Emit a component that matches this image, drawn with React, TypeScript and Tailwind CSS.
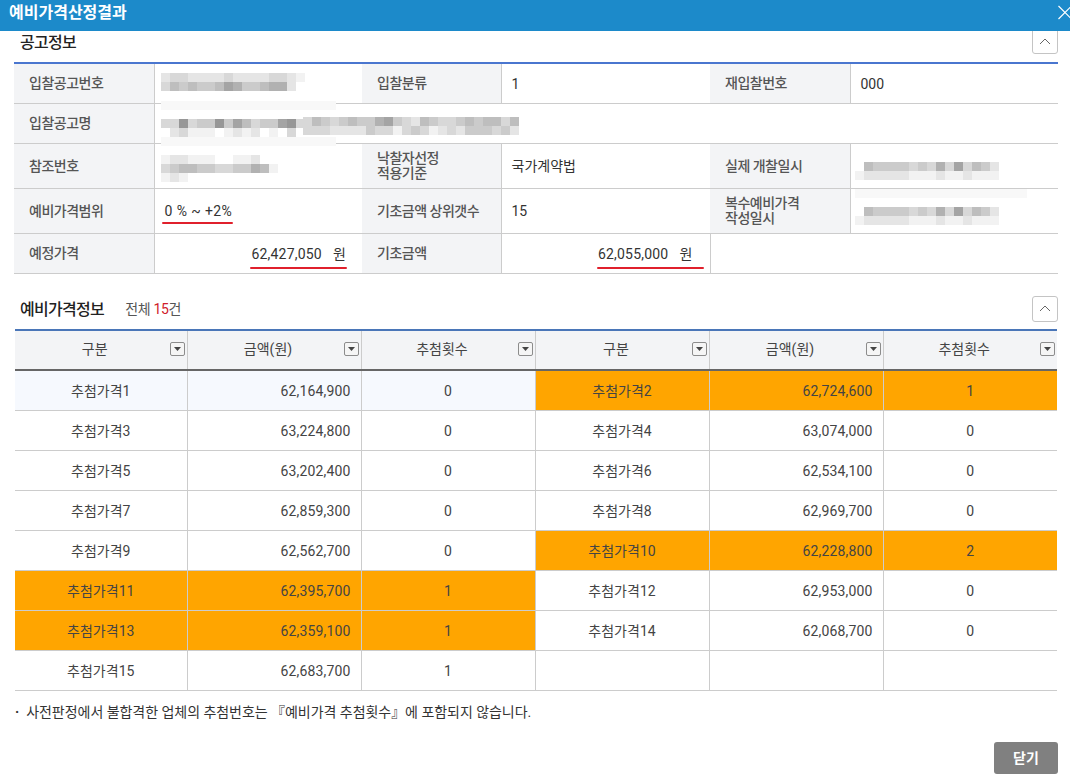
import React from 'react';

const fontStack = 'font-["Roboto","Noto_Sans_CJK_KR",sans-serif]';

// blurred-out values in the screenshot, each digit is a grey level
const shade = (d: string) => {
  const v = 255 - Number(d) * 13;
  return `rgb(${v},${v},${v})`;
};

const Mosaic: React.FC<{ rows: string[]; className: string }> = ({ rows, className }) => (
  <svg
    className={`absolute ${className}`}
    width={rows[0].length * 9}
    height={rows.length * 9}
    shapeRendering="crispEdges"
  >
    {rows.map((row, y) =>
      row.split('').map((c, x) => <rect key={`${x}-${y}`} x={x * 9} y={y * 9} width={9} height={9} fill={shade(c)} />),
    )}
  </svg>
);

const Label: React.FC<{ children: React.ReactNode }> = ({ children }) => (
  <td className="border border-[#cccccc] border-l-0 bg-[#f3f4f6] pl-[15px] pr-2 text-[14px] leading-[15px] font-medium tracking-[-0.5px] text-[#555555]">
    <div className="pt-[1px]">{children}</div>
  </td>
);

const Value: React.FC<{ children?: React.ReactNode; colSpan?: number; className?: string }> = ({
  children,
  colSpan,
  className = '',
}) => (
  <td colSpan={colSpan} className={`relative border border-[#cccccc] border-r-0 px-[10px] pt-[2px] text-[14px] text-[#333333] ${className}`}>
    {children}
  </td>
);

const CollapseButton = ({ className = '' }: { className?: string }) => (
  <button className={`flex h-[26px] w-[26px] items-center justify-center rounded-[3px] border border-[#c4c4c4] bg-white ${className}`}>
    <svg width="12" height="7" viewBox="0 0 12 7" fill="none" stroke="#666666" strokeWidth="1">
      <path d="M1 6 L6 1 L11 6" />
    </svg>
  </button>
);

const InfoTable = () => (
  <table className="ml-[14px] w-[1044px] table-fixed border-collapse border-t-2 border-b border-t-[#4a76cf] border-b-[#555555]">
    <colgroup>
      <col className="w-[140px]" />
      <col className="w-[208px]" />
      <col className="w-[139px]" />
      <col className="w-[209px]" />
      <col className="w-[140px]" />
      <col className="w-[208px]" />
    </colgroup>
    <tbody>
      <tr className="h-[40px]">
        <Label>입찰공고번호</Label>
        <Value>
          <Mosaic className="left-[6px] top-[9px]" rows={['2332222322223321', '3545445764456620']} />
        </Value>
        <Label>입찰분류</Label>
        <Value>1</Value>
        <Label>재입찰번호</Label>
        <Value>000</Value>
      </tr>
      <tr className="h-[40px]">
        <Label>입찰공고명</Label>
        <Value colSpan={5}>
          <div className="absolute left-[6px] top-[-3px] h-[9px] w-[175px] bg-[#f8f8f8]" />
          <div className="absolute left-[6px] top-[33px] h-[9px] w-[175px] bg-[#f8f8f8]" />
          <Mosaic className="left-[6px] top-[15px]" rows={['3383448475344783', '0231110121201030']} />
          <Mosaic className="left-[148px] top-[13px]" rows={['354345446743254334545535', '333222243313431232444342']} />
        </Value>
      </tr>
      <tr className="h-[45px]">
        <Label>참조번호</Label>
        <Value>
          <Mosaic className="left-[6px] top-[11px]" rows={['1221110011200', '3455443344651', '1210000000000']} />
        </Value>
        <Label>
          낙찰자선정
          <br />
          적용기준
        </Label>
        <Value>국가계약법</Value>
        <Label>실제 개찰일시</Label>
        <Value>
          <Mosaic className="left-[4px] top-[18px]" rows={['0544443436373542', '1222221112112111']} />
        </Value>
      </tr>
      <tr className="h-[45px]">
        <Label>예비가격범위</Label>
        <Value className="pl-[10px]">
          <span className="relative tracking-[0.4px]">
            0 % ~ +2%
            <span className="absolute left-[-3px] right-[-1px] top-[19px] h-[2px] rounded-full bg-[#e0202c]" />
          </span>
        </Value>
        <Label>기초금액 상위갯수</Label>
        <Value>15</Value>
        <Label>
          복수예비가격
          <br />
          작성일시
        </Label>
        <Value>
          <div className="absolute left-[4px] top-0 h-[9px] w-[172px] bg-[#f8f8f8]" />
          <Mosaic className="left-[4px] top-[18px]" rows={['0544443436373542', '1222221112112111']} />
        </Value>
      </tr>
      <tr className="h-[40px]">
        <Label>예정가격</Label>
        <Value className="text-right">
          <span className="relative mr-[5px] pr-[1px] tracking-[0.2px]">
            62,427,050 &nbsp; 원
            <span className="absolute left-[-1px] right-0 top-[21px] h-[2px] rounded-full bg-[#e0202c]" />
          </span>
        </Value>
        <Label>기초금액</Label>
        <Value className="text-right">
          <span className="relative mr-[-5px] pr-[12px] tracking-[0.2px]">
            62,055,000 &nbsp; 원
            <span className="absolute left-[-1px] right-[1px] top-[21px] h-[2px] rounded-full bg-[#e0202c]" />
          </span>
        </Value>
        <Value colSpan={2} />
      </tr>
    </tbody>
  </table>
);

type Price = { name: string; amount: string; count: string; hit?: boolean };

const rows: [Price, Price | null][] = [
  [{ name: '추첨가격1', amount: '62,164,900', count: '0' }, { name: '추첨가격2', amount: '62,724,600', count: '1', hit: true }],
  [{ name: '추첨가격3', amount: '63,224,800', count: '0' }, { name: '추첨가격4', amount: '63,074,000', count: '0' }],
  [{ name: '추첨가격5', amount: '63,202,400', count: '0' }, { name: '추첨가격6', amount: '62,534,100', count: '0' }],
  [{ name: '추첨가격7', amount: '62,859,300', count: '0' }, { name: '추첨가격8', amount: '62,969,700', count: '0' }],
  [{ name: '추첨가격9', amount: '62,562,700', count: '0' }, { name: '추첨가격10', amount: '62,228,800', count: '2', hit: true }],
  [{ name: '추첨가격11', amount: '62,395,700', count: '1', hit: true }, { name: '추첨가격12', amount: '62,953,000', count: '0' }],
  [{ name: '추첨가격13', amount: '62,359,100', count: '1', hit: true }, { name: '추첨가격14', amount: '62,068,700', count: '0' }],
  [{ name: '추첨가격15', amount: '62,683,700', count: '1' }, null],
];

const HeadCell = ({ label }: { label: string }) => (
  <th className="relative border border-y-0 border-[#cccccc] pb-[1px] first:border-l-0 last:border-r-0 text-center text-[14px] font-normal text-[#444444]">
    <span className="mr-[12px]">{label}</span>
    <span className="absolute right-[2px] top-[11px] flex h-[14px] w-[15px] items-center justify-center rounded-[2px] border border-[#8c8c8c] bg-[#f5f5f5]">
      <svg width="7" height="4" viewBox="0 0 7 4">
        <path d="M0 0 H7 L3.5 4 Z" fill="#444444" />
      </svg>
    </span>
  </th>
);

const PriceCells = ({ item, selected }: { item: Price | null; selected?: boolean }) => {
  const bg = item?.hit ? 'bg-[#ffa500]' : selected ? 'bg-[#f6f9fe]' : 'bg-white';
  const cell = `border border-[#cccccc] pt-[2px] text-[14px] text-[#444444] ${bg}`;
  return (
    <>
      <td className={`${cell} text-center`}>{item?.name}</td>
      <td className={`${cell} pr-[10px] text-right tracking-[0.15px]`}>{item?.amount}</td>
      <td className={`${cell} text-center`}>{item?.count}</td>
    </>
  );
};

const PriceTable = () => (
  <table className="ml-[15px] w-[1042px] table-fixed border-collapse border-t-2 border-b border-t-[#4a76b8] border-b-[#555555]">
    <colgroup>
      <col className="w-[172px]" />
      <col className="w-[174px]" />
      <col className="w-[174px]" />
      <col className="w-[174px]" />
      <col className="w-[174px]" />
      <col className="w-[174px]" />
    </colgroup>
    <thead>
      <tr className="h-[40px] border-b-2 border-b-[#666666] bg-[#f3f4f6]">
        {['구분', '금액(원)', '추첨횟수', '구분', '금액(원)', '추첨횟수'].map((label, i) => (
          <HeadCell key={i} label={label} />
        ))}
      </tr>
    </thead>
    <tbody>
      {rows.map(([left, right], i) => (
        <tr key={i} className={`${i === 0 ? 'h-[41px]' : 'h-[40px]'} [&>td:first-child]:border-l-0 [&>td:last-child]:border-r-0`}>
          <PriceCells item={left} selected={i === 0} />
          <PriceCells item={right} />
        </tr>
      ))}
    </tbody>
  </table>
);

export default function App() {
  return (
    <div className={`h-[780px] w-[1070px] overflow-hidden bg-white ${fontStack}`}>
      <header className="relative z-10 flex h-[31px] items-center bg-[#1c8aca] pl-[9px]">
        <h1 className="mt-[-6px] text-[16px] font-bold text-white">예비가격산정결과</h1>
        <svg className="absolute left-[1058px] top-[5px]" width="14" height="15" viewBox="0 0 14 15" stroke="white" strokeWidth="1.2">
          <path d="M0.5 1 L13.5 14 M13.5 1 L0.5 14" />
        </svg>
      </header>

      <section className="flex h-[31px] items-start justify-between pl-5 pr-3">
        <h2 className="pt-[1px] text-[16px] leading-[22px] font-medium tracking-[-0.7px] text-[#222222]">공고정보</h2>
        <CollapseButton className="mt-[-3px]" />
      </section>
      <InfoTable />

      <section className="mt-[23px] flex h-[32px] items-start justify-between pl-5 pr-3">
        <div className="flex items-center pt-[1px]">
          <h2 className="text-[16px] leading-[24px] font-medium tracking-[-0.7px] text-[#222222]">예비가격정보</h2>
          <span className="ml-[21px] text-[14px] tracking-[-0.3px] text-[#555555]">
            전체 <span className="text-[#d0202a]">15</span>건
          </span>
        </div>
        <CollapseButton className="mt-[-1px]" />
      </section>
      <PriceTable />

      <p className="mt-[11px] pl-[15px] text-[14px] leading-[20px] tracking-[-0.04px] text-[#333333]">
        <span className="mr-[7px] font-bold">·</span>사전판정에서 불합격한 업체의 추첨번호는 『예비가격 추첨횟수』에 포함되지 않습니다.
      </p>

      <div className="mt-[20px] flex justify-end pr-3">
        <button className="h-[32px] w-[64px] rounded-[3px] bg-[#808080] text-[14px] font-bold text-white">닫기</button>
      </div>
    </div>
  );
}
